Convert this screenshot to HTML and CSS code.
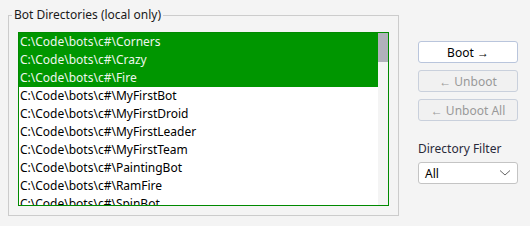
FILE: index.html
```html
<!DOCTYPE html>
<html lang="en">
<head>
    <meta charset="UTF-8">
    <title>Bot Directories</title>
    <link rel="stylesheet" href="styles.css">
</head>
<body>
    <div class="page">
        <fieldset class="group">
            <legend>Bot Directories (local only)</legend>
            <div class="list">
                <div class="rows">
                    <div class="row sel">C:\Code\bots\c#\Corners</div>
                    <div class="row sel">C:\Code\bots\c#\Crazy</div>
                    <div class="row sel">C:\Code\bots\c#\Fire</div>
                    <div class="row">C:\Code\bots\c#\MyFirstBot</div>
                    <div class="row">C:\Code\bots\c#\MyFirstDroid</div>
                    <div class="row">C:\Code\bots\c#\MyFirstLeader</div>
                    <div class="row">C:\Code\bots\c#\MyFirstTeam</div>
                    <div class="row">C:\Code\bots\c#\PaintingBot</div>
                    <div class="row">C:\Code\bots\c#\RamFire</div>
                    <div class="row">C:\Code\bots\c#\SpinBot</div>
                </div>
                <div class="scroll"><div class="thumb"></div></div>
            </div>
        </fieldset>
        <div class="side">
            <button class="btn">Boot →</button>
            <button class="btn" disabled>← Unboot</button>
            <button class="btn" disabled>← Unboot All</button>
            <div class="label">Directory Filter</div>
            <div class="select">
                <span>All</span>
                <svg width="12" height="8" viewBox="0 0 12 8"><path d="M1 1.5 L6 6 L11 1.5" fill="none" stroke="#666" stroke-width="1"/></svg>
            </div>
        </div>
    </div>
</body>
</html>
```

FILE: styles.css
```css
*{
    box-sizing: border-box;
}
html,body{
    margin: 0;
    padding: 0;
    background: #f4f4f4;
    font-family: "Noto Sans", "Open Sans", sans-serif;
    font-size: 12px;
    color: #000;
}
.page{
    display: flex;
    padding: 7px 0 0 8px;
}
.group{
    margin: 0;
    width: 391px;
    height: 209px;
    border: 1px solid #cccccc;
    padding: 0 9px 9px 9px;
}
.group legend{
    margin-left: -6px;
    padding: 0 2px;
    line-height: 16px;
    color: #1a1a1a;
}
.list{
    margin-top: 9px;
    height: 174px;
    border: 1px solid #008a00;
    background: #fff;
    display: flex;
    overflow: hidden;
}
.rows{
    flex: 1;
}
.row{
    height: 18px;
    line-height: 18px;
    padding-left: 1px;
    white-space: nowrap;
}
.row.sel{
    background: #009600;
    color: #eef6ee;
}
.scroll{
    width: 10px;
    background: #f4f4f4;
}
.thumb{
    height: 29px;
    background: #b1b1bb;
}
.side{
    display: flex;
    flex-direction: column;
    margin-left: 19px;
    padding-top: 34px;
    width: 100px;
}
.btn{
    height: 22px;
    margin-bottom: 7px;
    background: #fff;
    border: 1px solid #b9c5dc;
    border-radius: 3px;
    font-family: inherit;
    font-size: 12px;
    color: #000;
    padding: 0;
}
.btn:disabled{
    background: #f1f1f1;
    border-color: #c9d0dc;
    color: #999;
}
.label{
    margin-top: 13px;
    line-height: 16px;
    color: #2a2a3a;
}
.select{
    margin-top: 5px;
    height: 22px;
    border: 1px solid #c4c4c4;
    border-radius: 3px;
    background: #fff;
    display: flex;
    align-items: center;
    justify-content: space-between;
    padding: 0 6px 0 6px;
}
```
